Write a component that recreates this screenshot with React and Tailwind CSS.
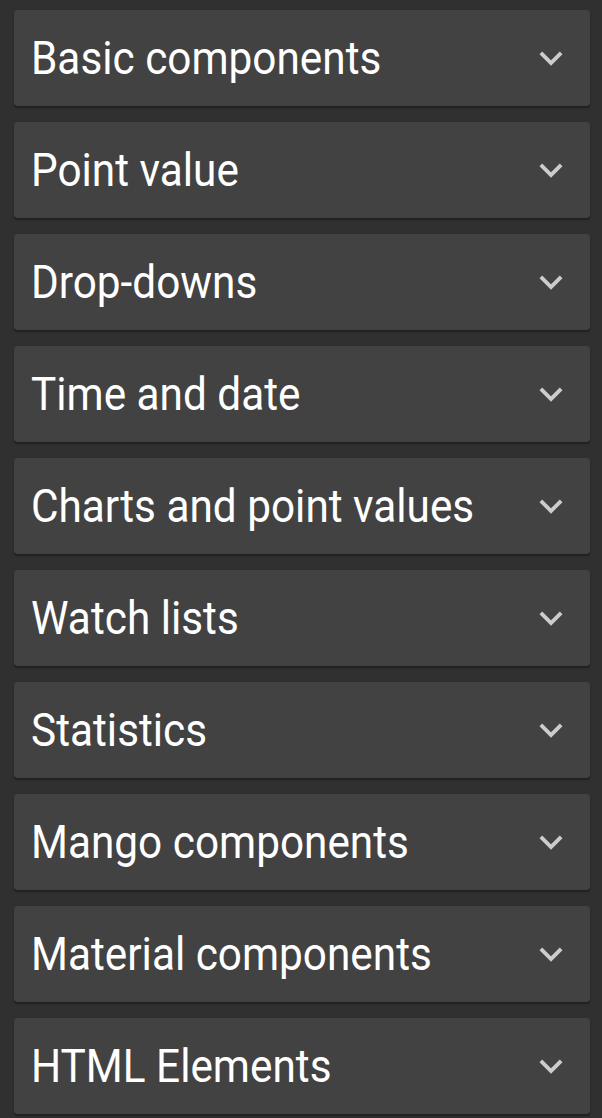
import React from "react";

const items = [
  "Basic components",
  "Point value",
  "Drop-downs",
  "Time and date",
  "Charts and point values",
  "Watch lists",
  "Statistics",
  "Mango components",
  "Material components",
  "HTML Elements",
];

export default function App() {
  return (
    <div className="min-h-[1118px] bg-[#303030] pl-[14px] pr-[12px] pt-[10px] flex flex-col gap-[16px]" style={{ fontFamily: "Roboto, sans-serif" }}>
      {items.map((t) => (
        <div key={t} className="h-[96px] rounded-[4px] bg-[#424242] shadow-[0_2px_2px_rgba(0,0,0,0.35)] flex items-center justify-between pl-[17px] pr-[16px]">
          <span className="text-white text-[46px] leading-none origin-left scale-x-[0.92] whitespace-nowrap">{t}</span>
          <svg width="46" height="46" viewBox="0 0 24 24" className="shrink-0">
            <path d="M16.59 8.59 12 13.17 7.41 8.59 6 10l6 6 6-6z" fill="#cccccc" />
          </svg>
        </div>
      ))}
    </div>
  );
}
